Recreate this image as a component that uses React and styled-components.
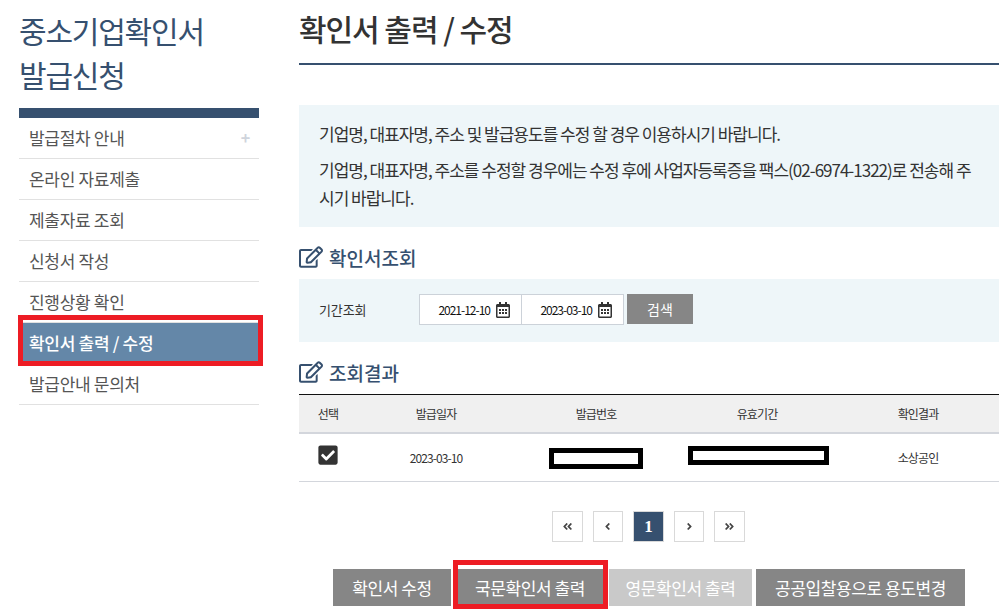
import styled, { createGlobalStyle } from 'styled-components';
import { FaRegEdit, FaRegCalendarAlt, FaCheckSquare, FaAngleDoubleLeft, FaAngleDoubleRight, FaAngleLeft, FaAngleRight } from 'react-icons/fa';

const Global = createGlobalStyle`
  html, body { margin: 0; padding: 0; background: #fff; }
  body { font-family: "Noto Sans CJK KR", "Noto Sans", sans-serif; color: #333; }
`
const Page = styled.div`width: 1004px;height: 616px;overflow: hidden;display: flex;padding-left: 19px;box-sizing: border-box;`
const Side = styled.div`width: 240px;margin-right: 40px;flex-shrink: 0;`
const SideTitle = styled.h2`margin: 8px 0 12px;height: 88px;font-size: 30px;line-height: 44px;font-weight: 400;letter-spacing: -1.2px;color: #36506f;`
const SideBar = styled.div`height: 10px;background: #36506f;`
const SideItem = styled.div`position: relative;height: 38px;border-bottom: 1px solid #e1e1e1;padding: 0 0 2px 10px;display: flex;align-items: center;justify-content: space-between;
  font-size: 17px;letter-spacing: -0.3px;color: ${p => p.$active ? '#fff' : '#555'};
  background: ${p => p.$active ? '#6487a8' : '#fff'};
  font-weight: ${p => p.$active ? 500 : 400};
  ${p => p.$active ? 'border-bottom-color: #6487a8;' : ''}`
const Plus = styled.span`color: #cfd4dc;font-size: 16px;font-weight: 700;margin-right: 9px;`
const RedBox = styled.div`position: absolute;box-sizing: border-box;border: 5px solid #ed1c24;pointer-events: none;z-index: 2;
  top: ${p => p.$top}px;left: ${p => p.$left}px;right: ${p => p.$right}px;bottom: ${p => p.$bottom}px;`
const Main = styled.div`width: 700px;flex-shrink: 0;`
const Head = styled.h1`margin: 0;height: 63px;border-bottom: 2px solid #36506f;font-size: 30px;font-weight: 500;letter-spacing: -1.05px;line-height: 57px;color: #333;`
const Info = styled.div`margin-top: 40px;height: 122px;box-sizing: border-box;padding: 15px 20px 0;background: #eef6f9;font-size: 17px;letter-spacing: -1px;color: #333;word-break: break-all;`
const InfoLine = styled.p`margin: 0 0 8px;line-height: 28px;`
const Section = styled.h3`margin: 15px 0 0;height: 37px;padding-bottom: 7px;box-sizing: border-box;display: flex;align-items: center;gap: 6px;font-size: 19px;font-weight: 500;letter-spacing: 0;color: #36506f;
  svg { font-size: 24px; }`
const SearchBox = styled.div`height: 63px;box-sizing: border-box;padding: 15px 0 0 20px;background: #eef6f9;display: flex;align-items: flex-start;`
const SearchLabel = styled.span`width: 100px;line-height: 31px;font-size: 13px;letter-spacing: -0.1px;color: #333;`
const DateInput = styled.div`width: 103px;height: 31px;box-sizing: border-box;border: 1px solid #ccd2d9;background: #fff;display: flex;align-items: center;justify-content: flex-end;gap: 5px;padding-right: 10px;margin-left: ${p => p.$joined ? '-1px' : '0'};
  font-size: 12px;letter-spacing: -1px;color: #111;
  svg { font-size: 16px; color: #333; }`
const SearchBtn = styled.button`width: 66px;height: 30px;margin-left: 3px;border: 0;background: #868686;color: #fff;font-family: inherit;font-size: 14px;padding: 0;`
const Grid = styled.div`display: grid;grid-template-columns: 58px 158px 162px 160px 162px;align-items: center;text-align: center;
  font-size: 12px;letter-spacing: -0.9px;color: #333;`
const TableHead = styled(Grid)`height: 37px;border-top: 1px solid #111;border-bottom: 2px solid #d3d6dc;background: #f0f0f0;font-weight: 400;`
const TableRow = styled(Grid)`height: 47px;border-bottom: 1px solid #d3d6dc;`
const Check = styled.span`display: flex;justify-content: center;margin: -5px 1px 0 0;font-size: 22px;color: #333;
  svg { display: block; }`
const Redact = styled.span`display: block;box-sizing: border-box;margin: ${p => p.$mt}px auto 0;width: ${p => p.$w}px;height: ${p => p.$h}px;border: 5px solid #000;background: #fff;transform: translateX(${p => p.$dx || 0}px);`
const Pager = styled.div`margin: 29px 0 0 -1px;display: flex;justify-content: center;gap: 10px;`
const PageBtn = styled.div`width: 30.6px;height: 31px;box-sizing: border-box;border: 1px solid #d9d9d9;display: flex;align-items: center;justify-content: center;font-family: "Liberation Serif", serif;
  font-size: 17px;font-weight: 700;
  background: ${p => p.$active ? '#36506f' : '#fff'};color: ${p => p.$active ? '#fff' : '#444'};
  svg { font-size: 11px; }`
const Actions = styled.div`margin-top: 27px;margin-left: 34px;display: flex;gap: 4px;`
const ActionBtn = styled.button`position: relative;height: 37px;width: ${p => p.$w}px;border: 0;padding: 0;font-family: inherit;font-size: 17px;letter-spacing: -0.4px;color: #fff;
  background: ${p => p.$light ? '#c9c9c9' : '#868686'};`

const items = ['발급절차 안내', '온라인 자료제출', '제출자료 조회', '신청서 작성', '진행상황 확인', '확인서 출력 / 수정', '발급안내 문의처']

function App() {
  return (
    <Page>
      <Global />
      <Side>
        <SideTitle>중소기업확인서<br />발급신청</SideTitle>
        <SideBar />
        {items.map((t, i) => (
          <SideItem key={t} $active={i === 5}>
            {t}
            {i === 0 && <Plus>+</Plus>}
            {i === 5 && <RedBox $top={-8} $left={-1} $right={-4} $bottom={-3} />}
          </SideItem>
        ))}
      </Side>
      <Main>
        <Head>확인서 출력 / 수정</Head>
        <Info>
          <InfoLine>기업명, 대표자명, 주소 및 발급용도를 수정 할 경우 이용하시기 바랍니다.</InfoLine>
          <InfoLine>기업명, 대표자명, 주소를 수정할 경우에는 수정 후에 사업자등록증을 팩스(02-6974-1322)로 전송해 주시기 바랍니다.</InfoLine>
        </Info>
        <Section><FaRegEdit />확인서조회</Section>
        <SearchBox>
          <SearchLabel>기간조회</SearchLabel>
          <DateInput>2021-12-10<FaRegCalendarAlt /></DateInput>
          <DateInput $joined>2023-03-10<FaRegCalendarAlt /></DateInput>
          <SearchBtn>검색</SearchBtn>
        </SearchBox>
        <Section><FaRegEdit />조회결과</Section>
        <TableHead>
          <span>선택</span><span>발급일자</span><span>발급번호</span><span>유효기간</span><span>확인결과</span>
        </TableHead>
        <TableRow>
          <Check><FaCheckSquare /></Check>
          <span>2023-03-10</span>
          <Redact $w={94} $h={21} $mt={2} />
          <Redact $w={141} $h={19} $mt={-4} $dx={1} />
          <span>소상공인</span>
        </TableRow>
        <Pager>
          <PageBtn><FaAngleDoubleLeft /></PageBtn>
          <PageBtn><FaAngleLeft /></PageBtn>
          <PageBtn $active>1</PageBtn>
          <PageBtn><FaAngleRight /></PageBtn>
          <PageBtn><FaAngleDoubleRight /></PageBtn>
        </Pager>
        <Actions>
          <ActionBtn $w={118}>확인서 수정</ActionBtn>
          <ActionBtn $w={150}>국문확인서 출력<RedBox $top={-9} $left={-2} $right={-3} $bottom={-3} /></ActionBtn>
          <ActionBtn $w={143} $light>영문확인서 출력</ActionBtn>
          <ActionBtn $w={209}>공공입찰용으로 용도변경</ActionBtn>
        </Actions>
      </Main>
    </Page>
  );
}

export default App;
